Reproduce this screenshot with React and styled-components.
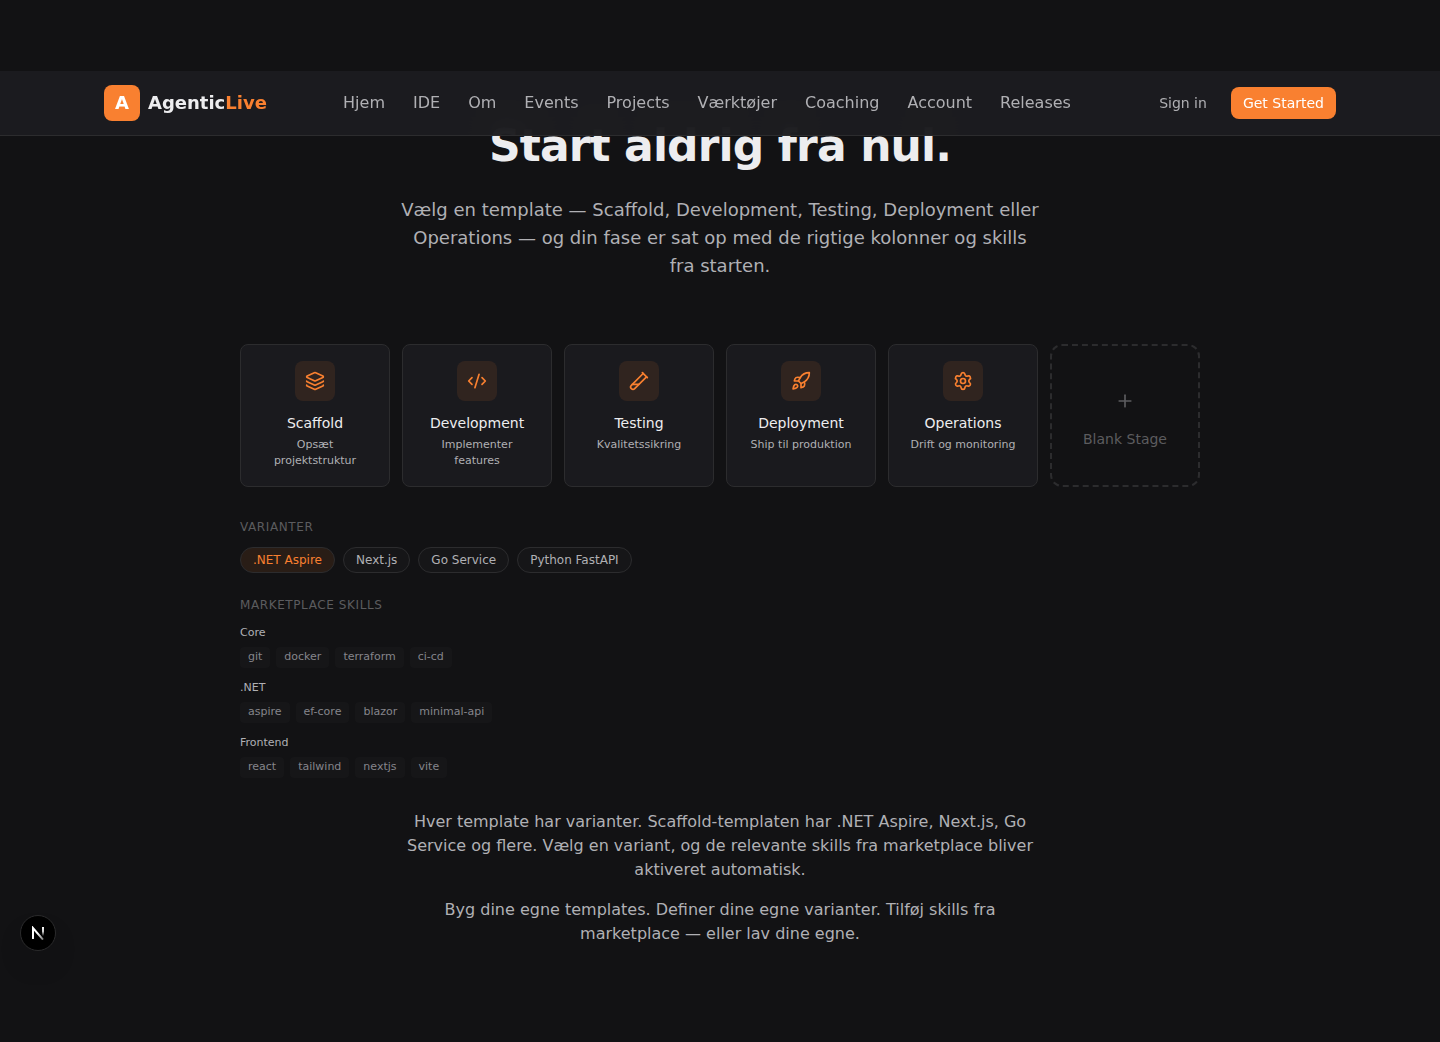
import React, { useState } from "react";
import styled, { createGlobalStyle, ThemeProvider } from "styled-components";
import {
  Layers,
  CodeXml,
  TestTubeDiagonal,
  Rocket,
  Settings,
  Plus,
} from "lucide-react";

const theme = {
  bg: "#121214",
  nav: "rgba(28, 28, 32, 0.95)",
  card: "#1a1a1e",
  pill: "#161618",
  border: "#2c2c2e",
  text: "#ededef",
  secondary: "#b0b0b4",
  subtle: "#85858b",
  muted: "#5c5c5f",
  accent: "#f98030",
  accentSoft: "rgba(249, 128, 48, 0.1)",
};

const GlobalStyle = createGlobalStyle`
  *, *::before, *::after { box-sizing: border-box; }
  body {
    margin: 0;
    background: ${theme.bg};
    color: ${theme.text};
    font-family: "DejaVu Sans", sans-serif;
    font-size: 16px;
    line-height: 24px;
  }
  h1, h2, h3, p, ul { margin: 0; padding: 0; }
  ul { list-style: none; }
  a { color: inherit; text-decoration: none; }
  button { font: inherit; cursor: pointer; }
`;

const Page = styled.div`
  min-height: 100vh;
  padding-top: 71px;
`;

const Header = styled.header`
  position: sticky;
  top: 0;
  z-index: 10;
  background: ${(p) => p.theme.nav};
  border-bottom: 1px solid ${(p) => p.theme.border};
  backdrop-filter: blur(12px);
`;

const HeaderInner = styled.div`
  display: flex;
  align-items: center;
  justify-content: space-between;
  max-width: 1280px;
  height: 64px;
  margin: 0 auto;
  padding: 0 24px;
`;

const Brand = styled.a`
  display: flex;
  align-items: center;
  gap: 8px;
  font-size: 18px;
  line-height: 28px;
  font-weight: 700;
`;

const BrandMark = styled.span`
  display: grid;
  place-items: center;
  width: 36px;
  height: 36px;
  border-radius: 8px;
  background: ${(p) => p.theme.accent};
  color: #fff;
`;

const BrandAccent = styled.span`
  color: ${(p) => p.theme.accent};
`;

const NavList = styled.ul`
  display: flex;
  gap: 28px;
  color: ${(p) => p.theme.secondary};
`;

const Actions = styled.div`
  display: flex;
  gap: 12px;
`;

const ActionButton = styled.button`
  height: 32px;
  padding: 0 12px;
  border: 0;
  border-radius: 8px;
  background: ${(p) => (p.$primary ? p.theme.accent : "transparent")};
  color: ${(p) => (p.$primary ? "#fff" : p.theme.secondary)};
  font-size: 14px;
  line-height: 20px;
`;

const Main = styled.main`
  max-width: 1008px;
  margin: -16px auto 0;
  padding: 0 24px 96px;
`;

const Title = styled.h1`
  font-size: 44px;
  line-height: 52px;
  font-weight: 700;
  letter-spacing: -0.02em;
  text-align: center;
`;

const Lead = styled.p`
  max-width: 640px;
  margin: 24px auto 64px;
  color: ${(p) => p.theme.secondary};
  font-size: 18px;
  line-height: 28px;
  text-align: center;
`;

const StageGrid = styled.div`
  display: grid;
  grid-template-columns: repeat(6, minmax(0, 1fr));
  gap: 12px;
  margin-bottom: 32px;
`;

const Stage = styled.article`
  display: flex;
  flex-direction: column;
  align-items: center;
  padding: 16px 16px 17px;
  border: 1px solid ${(p) => p.theme.border};
  border-radius: 8px;
  background: ${(p) => p.theme.card};
  text-align: center;
`;

const StageIcon = styled.span`
  display: grid;
  place-items: center;
  width: 40px;
  height: 40px;
  margin-bottom: 12px;
  border-radius: 8px;
  background: ${(p) => p.theme.accentSoft};
  color: ${(p) => p.theme.accent};
`;

const StageName = styled.h2`
  margin-bottom: 4px;
  font-size: 14px;
  line-height: 20px;
  font-weight: 500;
`;

const StageText = styled.p`
  color: ${(p) => p.theme.secondary};
  font-size: 11px;
  line-height: 16px;
`;

const BlankStage = styled.button`
  display: flex;
  flex-direction: column;
  align-items: center;
  justify-content: center;
  gap: 8px;
  padding: 0 16px 1px;
  border: 2px dashed ${(p) => p.theme.border};
  border-radius: 12px;
  background: transparent;
  color: ${(p) => p.theme.muted};
  font-size: 14px;
  line-height: 20px;
`;

const BlankIcon = styled.span`
  display: grid;
  place-items: center;
  width: 40px;
  height: 40px;
`;

const Label = styled.h2`
  margin-bottom: 12px;
  color: ${(p) => p.theme.muted};
  font-size: 12px;
  line-height: 16px;
  font-weight: 500;
  letter-spacing: 0.05em;
  text-transform: uppercase;
`;

const Variants = styled.div`
  display: flex;
  flex-wrap: wrap;
  gap: 8px;
  margin-bottom: 24px;
`;

const Variant = styled.button`
  padding: 4px 12px;
  border: 1px solid ${(p) => p.theme.border};
  border-radius: 999px;
  background: ${(p) => (p.$active ? p.theme.accentSoft : p.theme.pill)};
  color: ${(p) => (p.$active ? p.theme.accent : p.theme.secondary)};
  font-size: 12px;
  line-height: 16px;
`;

const SkillGroups = styled.div`
  display: flex;
  flex-direction: column;
  gap: 12px;
  margin-bottom: 32px;
  font-size: 11px;
  line-height: 16px;
`;

const GroupName = styled.h3`
  margin-bottom: 6px;
  color: ${(p) => p.theme.secondary};
  font-size: 11px;
  font-weight: 500;
`;

const SkillList = styled.ul`
  display: flex;
  flex-wrap: wrap;
  gap: 6px;
`;

const Skill = styled.li`
  padding: 2px 8px 3px;
  border-radius: 4px;
  background: ${(p) => p.theme.pill};
  color: ${(p) => p.theme.subtle};
`;

const Copy = styled.div`
  display: flex;
  flex-direction: column;
  gap: 16px;
  max-width: 640px;
  margin: 0 auto;
  color: ${(p) => p.theme.secondary};
  text-align: center;
`;

const DevBadge = styled.button`
  position: fixed;
  left: 20px;
  bottom: 91px;
  display: grid;
  place-items: center;
  width: 36px;
  height: 36px;
  padding: 0;
  border: 1px solid #2b2b2c;
  border-radius: 50%;
  background: #000;
  box-shadow: 0 16px 32px -8px rgba(0, 0, 0, 0.24);
`;

const links = [
  "Hjem",
  "IDE",
  "Om",
  "Events",
  "Projects",
  "Værktøjer",
  "Coaching",
  "Account",
  "Releases",
];

const stages = [
  { name: "Scaffold", text: "Opsæt projektstruktur", Icon: Layers },
  { name: "Development", text: "Implementer features", Icon: CodeXml },
  { name: "Testing", text: "Kvalitetssikring", Icon: TestTubeDiagonal },
  { name: "Deployment", text: "Ship til produktion", Icon: Rocket },
  { name: "Operations", text: "Drift og monitoring", Icon: Settings },
];

const variants = [".NET Aspire", "Next.js", "Go Service", "Python FastAPI"];

const skillGroups = [
  { name: "Core", skills: ["git", "docker", "terraform", "ci-cd"] },
  { name: ".NET", skills: ["aspire", "ef-core", "blazor", "minimal-api"] },
  { name: "Frontend", skills: ["react", "tailwind", "nextjs", "vite"] },
];

function NextMark() {
  return (
    <svg width="14" height="14" viewBox="0 0 14 14" fill="none" aria-hidden="true">
      <defs>
        <linearGradient id="stem" x1="0" y1="1" x2="0" y2="10" gradientUnits="userSpaceOnUse">
          <stop stopColor="#fff" />
          <stop offset="0.5" stopColor="#fff" stopOpacity="0.8" />
          <stop offset="1" stopColor="#fff" stopOpacity="0" />
        </linearGradient>
        <linearGradient id="diagonal" x1="7" y1="7" x2="13" y2="14" gradientUnits="userSpaceOnUse">
          <stop stopColor="#fff" />
          <stop offset="1" stopColor="#fff" stopOpacity="0.4" />
        </linearGradient>
      </defs>
      <path d="M2 13V2L12 13.6" stroke="url(#diagonal)" strokeWidth="2" />
      <path d="M12 1V10" stroke="url(#stem)" strokeWidth="2" />
    </svg>
  );
}

export default function App() {
  const [active, setActive] = useState(variants[0]);

  return (
    <ThemeProvider theme={theme}>
      <GlobalStyle />
      <Page>
        <Header>
          <HeaderInner>
            <Brand href="#">
              <BrandMark>A</BrandMark>
              <span>
                Agentic<BrandAccent>Live</BrandAccent>
              </span>
            </Brand>
            <nav>
              <NavList>
                {links.map((link) => (
                  <li key={link}>
                    <a href="#">{link}</a>
                  </li>
                ))}
              </NavList>
            </nav>
            <Actions>
              <ActionButton type="button">Sign in</ActionButton>
              <ActionButton type="button" $primary>
                Get Started
              </ActionButton>
            </Actions>
          </HeaderInner>
        </Header>

        <Main>
          <Title>Start aldrig fra nul.</Title>
          <Lead>
            Vælg en template — Scaffold, Development, Testing, Deployment eller
            Operations — og din fase er sat op med de rigtige kolonner og skills
            fra starten.
          </Lead>

          <StageGrid>
            {stages.map(({ name, text, Icon }) => (
              <Stage key={name}>
                <StageIcon>
                  <Icon size={20} />
                </StageIcon>
                <StageName>{name}</StageName>
                <StageText>{text}</StageText>
              </Stage>
            ))}
            <BlankStage type="button">
              <BlankIcon>
                <Plus size={20} />
              </BlankIcon>
              Blank Stage
            </BlankStage>
          </StageGrid>

          <Label>Varianter</Label>
          <Variants>
            {variants.map((name) => (
              <Variant
                key={name}
                type="button"
                $active={name === active}
                aria-pressed={name === active}
                onClick={() => setActive(name)}
              >
                {name}
              </Variant>
            ))}
          </Variants>

          <Label>Marketplace skills</Label>
          <SkillGroups>
            {skillGroups.map((group) => (
              <section key={group.name}>
                <GroupName>{group.name}</GroupName>
                <SkillList>
                  {group.skills.map((skill) => (
                    <Skill key={skill}>{skill}</Skill>
                  ))}
                </SkillList>
              </section>
            ))}
          </SkillGroups>

          <Copy>
            <p>
              Hver template har varianter. Scaffold-templaten har .NET Aspire,
              Next.js, Go Service og flere. Vælg en variant, og de relevante
              skills fra marketplace bliver aktiveret automatisk.
            </p>
            <p>
              Byg dine egne templates. Definer dine egne varianter. Tilføj skills
              fra marketplace — eller lav dine egne.
            </p>
          </Copy>
        </Main>

        <DevBadge type="button" aria-label="Next.js">
          <NextMark />
        </DevBadge>
      </Page>
    </ThemeProvider>
  );
}
